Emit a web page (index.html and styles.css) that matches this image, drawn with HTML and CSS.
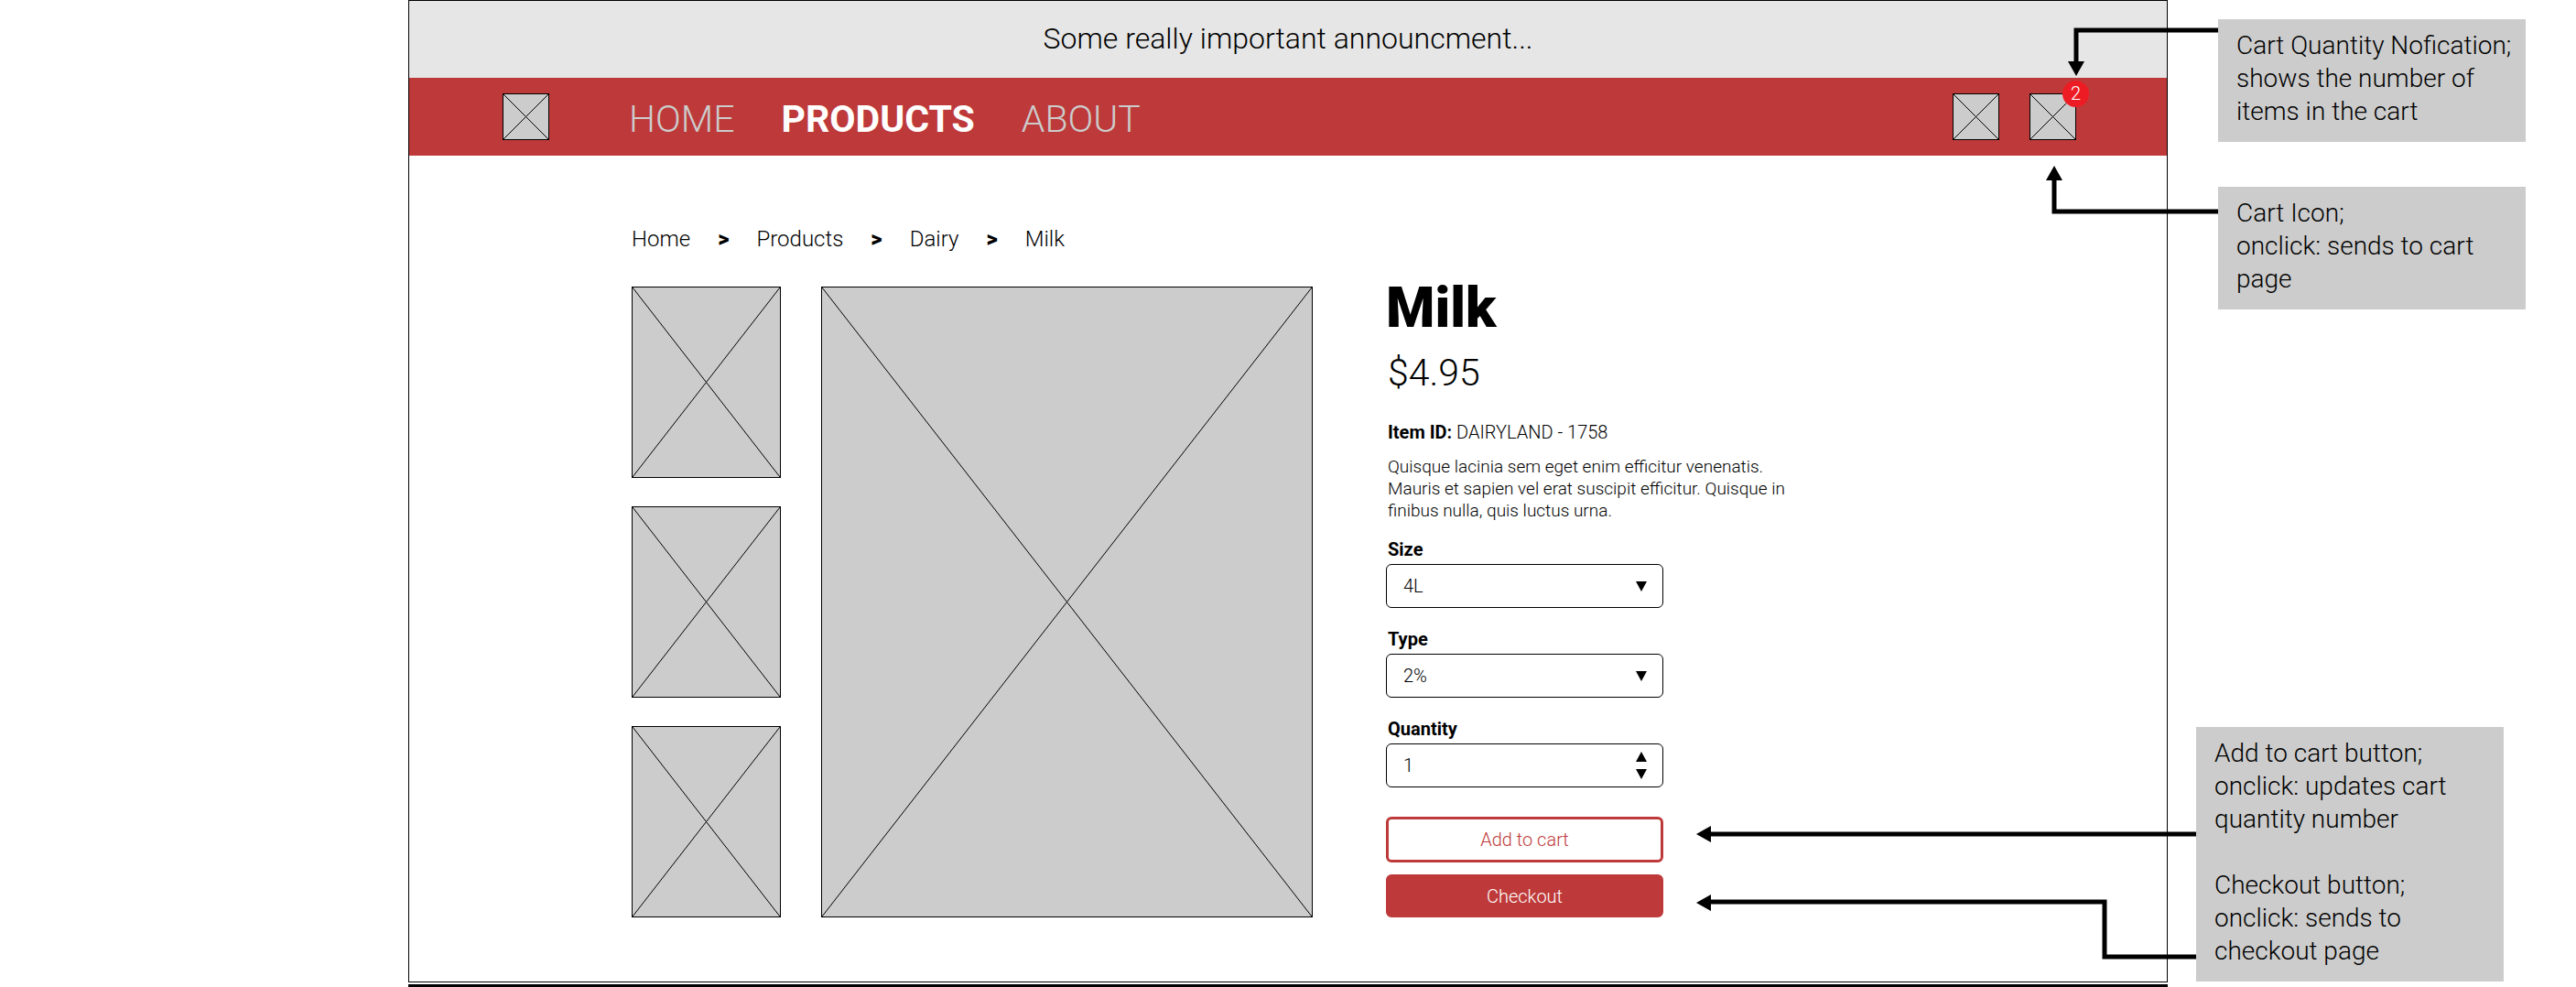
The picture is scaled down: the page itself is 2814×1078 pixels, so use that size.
FILE: index.html
```html
<!DOCTYPE html>
<html lang="en">
<head>
<meta charset="utf-8">
<meta name="viewport" content="width=device-width, initial-scale=1">
<title>Milk</title>
<link rel="stylesheet" href="styles.css">
</head>
<body>
<div class="board">
  <div class="frame">
    <p class="announcement">Some really important announcment...</p>
    <header class="navbar">
      <a class="box logo" href="#" aria-label="Logo"><svg viewBox="0 0 100 100" preserveAspectRatio="none"><path d="M0 0L100 100M100 0L0 100"/></svg></a>
      <nav class="links">
        <a href="#">HOME</a>
        <a class="current" href="#" aria-current="page">PRODUCTS</a>
        <a href="#">ABOUT</a>
      </nav>
      <div class="actions">
        <button class="box" type="button" aria-label="Account"><svg viewBox="0 0 100 100" preserveAspectRatio="none"><path d="M0 0L100 100M100 0L0 100"/></svg></button>
        <button class="box" type="button" aria-label="Cart"><svg viewBox="0 0 100 100" preserveAspectRatio="none"><path d="M0 0L100 100M100 0L0 100"/></svg><span class="badge">2</span></button>
      </div>
    </header>
    <main class="content">
      <nav class="crumbs" aria-label="Breadcrumb">
        <a href="#">Home</a><b>&gt;</b><a href="#">Products</a><b>&gt;</b><a href="#">Dairy</a><b>&gt;</b><a href="#">Milk</a>
      </nav>
      <div class="product">
        <div class="thumbs">
          <div class="box"><svg viewBox="0 0 100 100" preserveAspectRatio="none"><path d="M0 0L100 100M100 0L0 100"/></svg></div>
          <div class="box"><svg viewBox="0 0 100 100" preserveAspectRatio="none"><path d="M0 0L100 100M100 0L0 100"/></svg></div>
          <div class="box"><svg viewBox="0 0 100 100" preserveAspectRatio="none"><path d="M0 0L100 100M100 0L0 100"/></svg></div>
        </div>
        <div class="box"><svg viewBox="0 0 100 100" preserveAspectRatio="none"><path d="M0 0L100 100M100 0L0 100"/></svg></div>
        <section class="details">
          <h1>Milk</h1>
          <p class="price">$4.95</p>
          <p class="item"><b>Item ID:</b> DAIRYLAND - 1758</p>
          <p class="description">Quisque lacinia sem eget enim efficitur venenatis. Mauris et sapien vel erat suscipit efficitur. Quisque in finibus nulla, quis luctus urna.</p>
          <form class="options">
            <label for="size">Size</label>
            <div class="field">
              <select id="size"><option>4L</option></select>
              <svg class="arrow" viewBox="0 0 12 11"><path d="M0 0H12L6 11Z"/></svg>
            </div>
            <label for="type">Type</label>
            <div class="field">
              <select id="type"><option>2%</option></select>
              <svg class="arrow" viewBox="0 0 12 11"><path d="M0 0H12L6 11Z"/></svg>
            </div>
            <label for="quantity">Quantity</label>
            <div class="field">
              <input id="quantity" type="number" value="1" min="1">
              <div class="stepper">
                <button type="button" aria-label="Increase"><svg viewBox="0 0 12 11"><path d="M0 11H12L6 0Z"/></svg></button>
                <button type="button" aria-label="Decrease"><svg viewBox="0 0 12 11"><path d="M0 0H12L6 11Z"/></svg></button>
              </div>
            </div>
            <button class="add" type="button">Add to cart</button>
            <button class="checkout" type="button">Checkout</button>
          </form>
        </section>
      </div>
    </main>
  </div>
  <div class="next-frame"></div>
  <aside class="notes">
    <div class="note">
      <p>Cart Quantity Nofication; shows the number of<br>items in the cart</p>
      <svg class="pointer to-badge" width="165" height="56" viewBox="0 0 165 56"><path class="line" d="M165 5H10V42"/><path d="M1 39H19L10 55Z"/></svg>
    </div>
    <div class="note">
      <p>Cart Icon;<br>onclick: sends to cart page</p>
      <svg class="pointer to-cart" width="188" height="56" viewBox="0 0 188 56"><path class="line" d="M188 50H9V14"/><path d="M0 16H18L9 0Z"/></svg>
    </div>
    <div class="note last">
      <p>Add to cart button;<br>onclick: updates cart quantity number</p>
      <p>Checkout button;<br>onclick: sends to<br>checkout page</p>
      <svg class="pointer to-buttons" width="546" height="150" viewBox="0 0 546 150"><path class="line" d="M546 11H14M546 145H446V85H14"/><path d="M16 2V20L0 11ZM16 77V95L0 86Z"/></svg>
    </div>
  </aside>
</div>
</body>
</html>
```
FILE: styles.css
```css
* {
  box-sizing: border-box;
}

body {
  margin: 0;
  background: #fff;
  color: #000;
  font-family: Roboto, "Liberation Sans", sans-serif;
  font-weight: 350;
}

h1,
p {
  margin: 0;
}

a {
  color: inherit;
  text-decoration: none;
}

button,
input,
select {
  font: inherit;
  color: inherit;
}

.board {
  display: grid;
  grid-template-columns: 446fr 1922fr 446fr;
  grid-template-rows: auto auto;
  align-items: start;
}

.frame {
  grid-column: 2;
  border: 1px solid #000;
}

/* top edge of the artboard below */
.next-frame {
  grid-column: 2;
  height: 3px;
  margin-top: 2px;
  background: #000;
}

.announcement {
  padding: 19px 20px 21px;
  background: #e6e6e6;
  font-size: 32px;
  line-height: 44px;
  text-align: center;
}

.navbar {
  display: flex;
  align-items: center;
  height: 85px;
  padding: 0 99px 0 102px;
  background: #be3a3a;
}

.box {
  position: relative;
  display: block;
  padding: 0;
  border: 1px solid #000;
  background: #ccc;
}

.box svg {
  position: absolute;
  inset: 0;
  width: 100%;
  height: 100%;
  fill: none;
  stroke: #000;
  stroke-width: 1;
}

.box path {
  vector-effect: non-scaling-stroke;
}

.navbar .box {
  width: 51px;
  height: 51px;
}

.links {
  display: flex;
  gap: 51px;
  margin-left: 87px;
  padding-top: 4px;
  color: #ccc;
  font-size: 41px;
  line-height: 48px;
  font-weight: 300;
}

.links .current {
  color: #fff;
  font-weight: 700;
}

.actions {
  display: flex;
  gap: 33px;
  margin-left: auto;
}

.badge {
  position: absolute;
  top: -15px;
  right: -15px;
  width: 29px;
  height: 29px;
  border-radius: 50%;
  background: #ed1c24;
  color: #fff;
  font-size: 20px;
  line-height: 29px;
  text-align: center;
}

.content {
  padding: 76px 0 70px 243px;
}

.crumbs {
  display: flex;
  gap: 30px;
  font-size: 24px;
  line-height: 30px;
}

.crumbs b {
  font-weight: 900;
}

.product {
  display: grid;
  grid-template-columns: 163fr 537fr 889fr;
  gap: 44px;
  margin-top: 37px;
}

.thumbs {
  display: grid;
  grid-template-rows: repeat(3, 1fr);
  gap: 31px;
}

.details {
  padding-left: 36px;
}

.details p,
.details label {
  padding-left: 2px;
}

h1 {
  font-size: 61px;
  line-height: 46px;
  font-weight: 900;
}

.price {
  margin-top: 26px;
  font-size: 41px;
  line-height: 44px;
  font-weight: 300;
}

.item {
  margin-top: 31px;
  font-size: 20px;
  line-height: 24px;
}

.item b {
  font-weight: 700;
}

.description {
  max-width: 450px;
  margin-top: 14px;
  font-size: 19px;
  line-height: 24px;
}

.options {
  display: flex;
  flex-direction: column;
  max-width: 303px;
  margin-top: 18px;
  font-size: 20px;
  line-height: 24px;
}

.options label {
  margin-bottom: 4px;
  font-weight: 700;
}

.field {
  display: flex;
  position: relative;
  height: 48px;
  margin-bottom: 22px;
  border: 1px solid #000;
  border-radius: 6px;
}

.field select,
.field input {
  flex: 1;
  min-width: 0;
  padding: 0 18px;
  border: 0;
  border-radius: 6px;
  background: none;
  appearance: none;
}

.field input {
  appearance: textfield;
}

.arrow {
  position: absolute;
  top: 18px;
  right: 17px;
  width: 12px;
  height: 11px;
  pointer-events: none;
}

.stepper {
  display: flex;
  flex-direction: column;
  justify-content: center;
  gap: 8px;
  padding-right: 17px;
}

.stepper button {
  display: block;
  padding: 0;
  border: 0;
  background: none;
}

.stepper svg {
  display: block;
  width: 12px;
  height: 11px;
}

.add,
.checkout {
  padding: 0;
  border: 3px solid #be3a3a;
  border-radius: 6px;
}

.add {
  height: 50px;
  margin-top: 10px;
  background: #fff;
  color: #be3a3a;
}

.checkout {
  height: 47px;
  margin-top: 13px;
  background: #be3a3a;
  color: #fff;
}

.notes {
  grid-column: 3;
  grid-row: 1 / span 2;
  display: flex;
  flex-direction: column;
  gap: 49px;
  padding: 21px 55px 0;
  font-size: 28px;
  line-height: 36px;
}

.note {
  position: relative;
  padding: 11px 0 15px 20px;
  background: #ccc;
}

.note.last {
  display: grid;
  gap: 36px;
  margin: 407px 24px 0 -24px;
}

.pointer {
  position: absolute;
  right: 100%;
}

.pointer .line {
  fill: none;
  stroke: #000;
  stroke-width: 5;
}

.to-badge {
  top: 7px;
}

.to-cart {
  top: -23px;
}

.to-buttons {
  top: 106px;
}
```
